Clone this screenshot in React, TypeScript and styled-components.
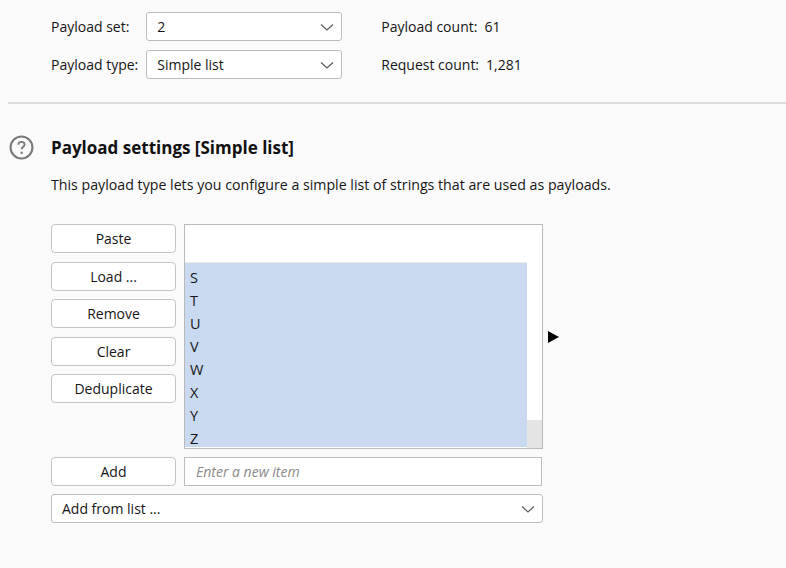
import styled, { createGlobalStyle } from 'styled-components';

const GlobalStyle = createGlobalStyle`
  html, body {
    margin: 0;
    padding: 0;
    background-color: #fafafa;
  }
  body {
    font-family: 'Open Sans', 'Noto Sans', sans-serif;
    font-size: 14px;
    color: #161616;
  }
`;

const Page = styled.div`
  width: 786px;
  height: 568px;
  overflow: hidden;
  background-color: #fafafa;
`;

const TopGrid = styled.div`
  display: grid;
  grid-template-columns: auto 196px auto;
  grid-auto-rows: 29px;
  justify-content: start;
  align-content: start;
  column-gap: 8px;
  row-gap: 9px;
  align-items: center;
  padding: 12px 0 0 51px;
  height: 102px;
  box-sizing: border-box;
`;

const FieldLabel = styled.span`
  white-space: nowrap;
`;

const Stat = styled.span`
  margin-left: 31px;
  white-space: nowrap;
`;

const StatValue = styled.span`
  margin-left: 7px;
`;

const SelectBox = styled.div<{ $wide?: boolean }>`
  display: flex;
  align-items: center;
  justify-content: space-between;
  height: 29px;
  box-sizing: border-box;
  border: 1px solid #bdbdbd;
  border-radius: 3px;
  background-color: #ffffff;
  padding: 0 5px 0 10px;
  width: ${(p) => (p.$wide ? '492px' : '100%')};
`;

const Separator = styled.hr`
  margin: 0 0 0 8px;
  border: none;
  height: 2px;
  background-color: #dcdcdc;
`;

const SettingsHeader = styled.div`
  display: flex;
  align-items: center;
  gap: 17px;
  padding: 31px 0 0 9px;
`;

const HeaderTitle = styled.h2`
  margin: 0;
  font-size: 17px;
  font-weight: 700;
  color: #111;
`;

const Description = styled.p`
  margin: 15px 0 0 51px;
  line-height: 20px;
  font-size: 14.2px;
`;

const Body = styled.div`
  padding: 29px 0 0 51px;
  display: flex;
  flex-direction: column;
  gap: 8px;
`;

const ListRow = styled.div`
  display: flex;
  align-items: center;
`;

const ButtonColumn = styled.div`
  display: flex;
  flex-direction: column;
  gap: 8.5px;
  align-self: flex-start;
  width: 125px;
  margin-right: 8px;
`;

const Button = styled.button`
  height: 29px;
  width: 125px;
  box-sizing: border-box;
  border: 1px solid #c4c4c4;
  border-radius: 4px;
  background-color: #ffffff;
  font-family: inherit;
  font-size: 14px;
  color: #161616;
  padding: 0;
`;

const ListBox = styled.div`
  display: flex;
  width: 359px;
  height: 225px;
  box-sizing: border-box;
  border: 1px solid #b9b9b9;
  background-color: #ffffff;
`;

const ListItems = styled.div`
  flex: 1;
  display: flex;
  flex-direction: column;
`;

const EmptyArea = styled.div`
  height: 37px;
  border-bottom: 1px solid #ececec;
`;

const ListItem = styled.div<{ $selected?: boolean }>`
  height: 23px;
  line-height: 23px;
  padding: 3px 0 0 5px;
  box-sizing: border-box;
  font-size: 14.5px;
  background-color: ${(p) => (p.$selected ? '#c9daf0' : 'transparent')};
`;

const ScrollTrack = styled.div`
  width: 15px;
  display: flex;
  flex-direction: column;
  justify-content: flex-end;
`;

const ScrollThumb = styled.div`
  height: 28px;
  background-color: #e4e4e4;
`;

const SideArrow = styled.div`
  margin-left: 5px;
  width: 0;
  height: 0;
  border-top: 6.5px solid transparent;
  border-bottom: 6.5px solid transparent;
  border-left: 11px solid #000;
`;

const AddRow = styled.div`
  display: flex;
  align-items: center;
  gap: 8px;
`;

const ItemInput = styled.div`
  width: 358px;
  height: 29px;
  box-sizing: border-box;
  border: 1px solid #bdbdbd;
  background-color: #ffffff;
  padding-left: 11px;
  display: flex;
  align-items: center;
  font-style: italic;
  color: #8a8a8a;
`;

const Chevron = () => (
  <svg width="18" height="18" viewBox="0 0 18 18">
    <path d="M3 6.5 L9 12 L15 6.5" fill="none" stroke="#5a5a5a" strokeWidth="1.2" />
  </svg>
);

const HelpIcon = () => (
  <svg width="25" height="25" viewBox="0 0 24 24">
    <circle cx="12" cy="12" r="10.5" fill="none" stroke="#7a7a7a" strokeWidth="2" />
    <path
      d="M9 9.4 C9 7.5 10.4 6.6 12 6.6 C13.7 6.6 15 7.6 15 9.2 C15 11.2 12.2 11.4 12.2 13.6"
      fill="none"
      stroke="#7a7a7a"
      strokeWidth="1.8"
    />
    <circle cx="12.2" cy="17" r="1.2" fill="#7a7a7a" />
  </svg>
);

const items = ['S', 'T', 'U', 'V', 'W', 'X', 'Y', 'Z'];
const actions = ['Paste', 'Load ...', 'Remove', 'Clear', 'Deduplicate'];

const App = () => {
  return (
    <Page>
      <GlobalStyle />
      <TopGrid>
        <FieldLabel>Payload set:</FieldLabel>
        <SelectBox>
          <span>2</span>
          <Chevron />
        </SelectBox>
        <Stat>
          Payload count:<StatValue>61</StatValue>
        </Stat>
        <FieldLabel>Payload type:</FieldLabel>
        <SelectBox>
          <span>Simple list</span>
          <Chevron />
        </SelectBox>
        <Stat>
          Request count:<StatValue>1,281</StatValue>
        </Stat>
      </TopGrid>
      <Separator />
      <SettingsHeader>
        <HelpIcon />
        <HeaderTitle>Payload settings [Simple list]</HeaderTitle>
      </SettingsHeader>
      <Description>
        This payload type lets you configure a simple list of strings that are used as payloads.
      </Description>
      <Body>
        <ListRow>
          <ButtonColumn>
            {actions.map((a) => (
              <Button key={a}>{a}</Button>
            ))}
          </ButtonColumn>
          <ListBox>
            <ListItems>
              <EmptyArea />
              {items.map((i) => (
                <ListItem key={i} $selected>
                  {i}
                </ListItem>
              ))}
            </ListItems>
            <ScrollTrack>
              <ScrollThumb />
            </ScrollTrack>
          </ListBox>
          <SideArrow />
        </ListRow>
        <AddRow>
          <Button>Add</Button>
          <ItemInput>Enter a new item</ItemInput>
        </AddRow>
        <SelectBox $wide>
          <span>Add from list ...</span>
          <Chevron />
        </SelectBox>
      </Body>
    </Page>
  );
};

export default App;
